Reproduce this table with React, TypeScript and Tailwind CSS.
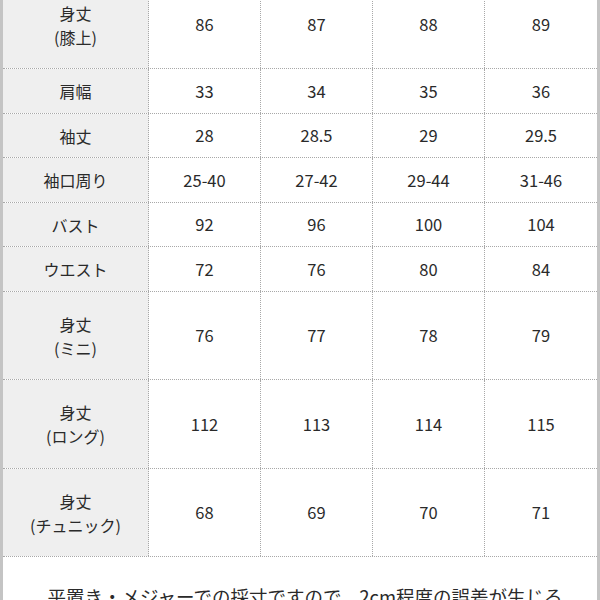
const cols = ['S', 'M', 'L', 'XL'];

type Row = { label: string[]; values: string[]; h: string };

const rows: Row[] = [
  { label: ['身丈', '(膝上)'], values: ['86', '87', '88', '89'], h: 'h-[88px]' },
  { label: ['肩幅'], values: ['33', '34', '35', '36'], h: 'h-[45px]' },
  { label: ['袖丈'], values: ['28', '28.5', '29', '29.5'], h: 'h-[44px]' },
  { label: ['袖口周り'], values: ['25-40', '27-42', '29-44', '31-46'], h: 'h-[45px]' },
  { label: ['バスト'], values: ['92', '96', '100', '104'], h: 'h-[44px]' },
  { label: ['ウエスト'], values: ['72', '76', '80', '84'], h: 'h-[45px]' },
  { label: ['身丈', '(ミニ)'], values: ['76', '77', '78', '79'], h: 'h-[88px]' },
  { label: ['身丈', '(ロング)'], values: ['112', '113', '114', '115'], h: 'h-[89px]' },
  { label: ['身丈', '(チュニック)'], values: ['68', '69', '70', '71'], h: 'h-[88px]' },
];

export default function App() {
  return (
    <div className="h-[600px] w-[600px] overflow-hidden bg-white">
      <div
        className="-mt-[19px] border-x-[3px] border-[#c4c4c4] text-[16px] text-[#2a2a2a]"
        style={{ fontFamily: '"Noto Sans CJK JP", "Noto Sans", sans-serif' }}
      >
        {rows.map((row, i) => (
          <div
            key={i}
            className={`grid grid-cols-[146px_repeat(4,1fr)] border-b border-dotted border-[#a8a8a8] ${row.h}`}
          >
            <div className="flex flex-col items-center justify-center border-r border-dotted border-[#a8a8a8] bg-[#efefef] leading-[24px]">
              {row.label.map((t, j) => (
                <span key={j}>{t}</span>
              ))}
            </div>
            {row.values.map((v, j) => (
              <div
                key={cols[j]}
                className={`flex items-center justify-center text-[16.5px] ${j < 3 ? 'border-r border-dotted border-[#a8a8a8]' : ''}`}
              >
                {v}
              </div>
            ))}
          </div>
        ))}
        <div className="flex justify-center pt-[25px] pl-[10px] text-[18.5px] leading-[28px]">
          平置き・メジャーでの採寸ですので、2cm程度の誤差が生じる
        </div>
      </div>
    </div>
  );
}
